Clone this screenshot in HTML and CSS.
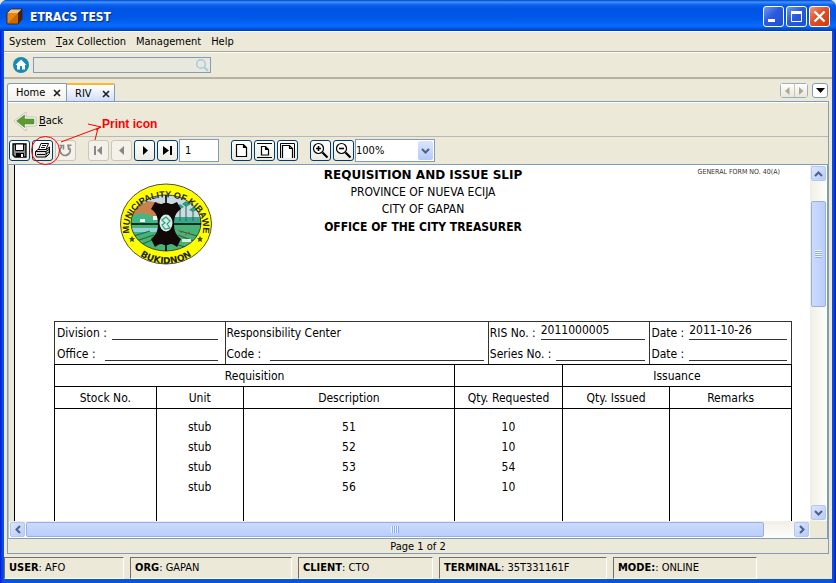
FILE: index.html
```html
<!DOCTYPE html>
<html lang="en">
<head>
<meta charset="utf-8">
<title>ETRACS TEST</title>
<link rel="stylesheet" href="styles.css">
</head>
<body>
<div class="window">
  <header class="titlebar">
    <svg class="app-icon" viewBox="0 0 17 17" width="17" height="17" aria-hidden="true">
      <path d="M1 5 5 1h11l-4 4z" fill="#e9c78a"/><path d="M12 5l4-4v10l-4 5z" fill="#4a2508"/><path d="M1 5h11v11H1z" fill="#e8860f"/><path d="M1 16 12 5v11z" fill="#c96a06"/><path d="M1 5 5 1h11v10l-4 5H1z" fill="none" stroke="#3a1d08" stroke-width=".8"/>
    </svg>
    <h1 class="title">ETRACS TEST</h1>
    <button class="win-btn" aria-label="Minimize"><svg viewBox="0 0 19 19" width="19" height="19"><path d="M4 12h7v3H4z" fill="#fff"/></svg></button>
    <button class="win-btn" aria-label="Maximize"><svg viewBox="0 0 19 19" width="19" height="19"><path d="M4.500 5.500h10v9h-10z" fill="none" stroke="#fff"/><path d="M4 4h11v3H4z" fill="#fff"/></svg></button>
    <button class="win-btn close" aria-label="Close"><svg viewBox="0 0 19 19" width="19" height="19"><path d="M4.500 4.500l10 10M14.500 4.500l-10 10" stroke="#fff" stroke-width="2.300"/></svg></button>
  </header>

  <nav class="menubar">
    <button>System</button><button><u>T</u>ax Collection</button><button>Management</button><button>Help</button>
  </nav>

  <div class="quickbar">
    <button class="home" aria-label="Home"><svg viewBox="0 0 16 16" width="16" height="16"><circle cx="8" cy="8" r="8" fill="#168ab4"/><path d="M8 2.500 2.500 8H4v4.500h3V9h2v3.500h3V8h1.500z" fill="#fff"/></svg></button>
    <label class="search"><input type="text" aria-label="Search"><svg viewBox="0 0 14 14" width="14" height="14"><circle cx="6" cy="6" r="4.300" fill="none" stroke="#a5cbdc" stroke-width="1.500"/><path d="M9 9l4 4" stroke="#a5cbdc" stroke-width="2"/></svg></label>
  </div>

  <div class="tabstrip">
    <div class="tab">Home<button aria-label="Close Home"><svg viewBox="0 0 8 8" width="8" height="8"><path d="M1 1l6 6M7 1 1 7" stroke="#222" stroke-width="1.700"/></svg></button></div>
    <div class="tab active">RIV<button aria-label="Close RIV"><svg viewBox="0 0 8 8" width="8" height="8"><path d="M1 1l6 6M7 1 1 7" stroke="#222" stroke-width="1.700"/></svg></button></div>
    <div class="tab-nav">
      <button aria-label="Previous tab"><svg viewBox="0 0 5 8" width="5" height="8"><path d="M4.500 0v8L0 4z" fill="#aca899"/></svg></button><button aria-label="Next tab"><svg viewBox="0 0 5 8" width="5" height="8"><path d="M0 0v8l4.500-4z" fill="#aca899"/></svg></button>
    </div>
    <button class="tab-list" aria-label="Tab list"><svg viewBox="0 0 9 5" width="9" height="5"><path d="M0 0h9L4.500 5z" fill="#000"/></svg></button>
  </div>

  <main class="panel">
    <div class="backbar">
      <button class="back"><svg viewBox="0 0 24 20" width="24" height="20" aria-hidden="true"><path d="M1 10 13 1v5h10v9H13v5z" fill="#fff" stroke="#c4c2b6"/><path d="M3.500 10 11.500 4v4H21v5h-9.500v3.500z" fill="#5b9a31" stroke="#4a8428" stroke-width=".6"/></svg><span><u>B</u>ack</span></button>
    </div>

    <div class="toolbar">
      <div class="group">
        <button aria-label="Save"><svg viewBox="0 0 17 17"><path d="M2 2h13v13H4l-2-2z" fill="#8a8a8a" stroke="#000" stroke-width="1.300"/><path d="M4.500 2h8v6.500h-8z" fill="#fff" stroke="#000"/><path d="M5 11h8v4H5z" fill="#000"/><path d="M10 12h2v3h-2z" fill="#fff"/></svg></button>
        <button aria-label="Print"><svg viewBox="0 0 17 17"><path d="M4.500 7.500 7 1.500h7.500L12 7.500z" fill="#fff" stroke="#000"/><path d="M8 3.500h4M7 5.500h4" stroke="#000" stroke-width=".9"/><path d="M1.500 9.500 4 7.500h8.500L15.500 5v6.500L12 15H2.500l-1-2z" fill="#ddd" stroke="#000"/><path d="M1.500 9.500H12L15.500 7M12 9.500V15M3 12.500h8M12 12l3.500-2.500" fill="none" stroke="#000"/></svg></button>
        <button disabled aria-label="Reload"><svg viewBox="0 0 17 17"><path d="M5 4.500A5 5 0 1 0 12.500 6" fill="none" stroke="#8a8a8a" stroke-width="1.900"/><path d="M10 2.500h4.500v1.500h-2V8H11z" fill="#8a8a8a"/><path d="M2.500 3.500h4v4" fill="none" stroke="#8a8a8a" stroke-width="1.500"/></svg></button>
      </div>
      <div class="group">
        <button disabled aria-label="First page"><svg viewBox="0 0 17 17"><path d="M4 4h2v9H4zM12 4v9L7 8.500z" fill="#888"/></svg></button>
        <button disabled aria-label="Previous page"><svg viewBox="0 0 17 17"><path d="M11 4v9L6 8.500z" fill="#888"/></svg></button>
        <button aria-label="Next page"><svg viewBox="0 0 17 17"><path d="M7 4v9l5-4.500z"/></svg></button>
        <button aria-label="Last page"><svg viewBox="0 0 17 17"><path d="M4 4v9l6-4.500zM11 4h2v9h-2z"/></svg></button>
        <input class="page-no" type="text" value="1" aria-label="Page number">
      </div>
      <div class="group">
        <button aria-label="Actual size"><svg viewBox="0 0 17 17"><path d="M3.500 2.500h7l3 3v9h-10zM10.500 2.500v3h3" fill="#fff" stroke="#000" stroke-width="1.200"/></svg></button>
        <button aria-label="Fit page"><svg viewBox="0 0 17 17"><path d="M1 1.500h15M1 15.500h15" stroke="#000"/><path d="M5.500 4.500h4l3 3v5.500h-7zM9.500 4.500v3h3" fill="#fff" stroke="#000" stroke-width="1.200"/></svg></button>
        <button aria-label="Fit width"><svg viewBox="0 0 17 17"><path d="M1.500 16V1.500h14V16" fill="none" stroke="#000"/><path d="M3.500 16V3.500h7l3 3V16M10.500 3.500v3h3" fill="#fff" stroke="#000" stroke-width="1.200"/></svg></button>
      </div>
      <div class="group">
        <button aria-label="Zoom in"><svg viewBox="0 0 17 17"><circle cx="6.500" cy="6.500" r="5" fill="#fff" stroke="#000" stroke-width="1.200"/><path d="M4 6.500h5M6.500 4v5" stroke="#000" stroke-width="1.600"/><path d="M10.500 10.500l5 5" stroke="#000" stroke-width="2.200"/></svg></button>
        <button aria-label="Zoom out"><svg viewBox="0 0 17 17"><circle cx="6.500" cy="6.500" r="5" fill="#fff" stroke="#000" stroke-width="1.200"/><path d="M4 6.500h5" stroke="#000" stroke-width="1.600"/><path d="M10.500 10.500l5 5" stroke="#000" stroke-width="2.200"/></svg></button>
        <div class="zoom"><select aria-label="Zoom level"><option>100%</option></select><span class="drop"><svg viewBox="0 0 9 6" width="9" height="6"><path d="M1 1l3.500 3.500L8 1" fill="none" stroke="#4d6185" stroke-width="2"/></svg></span></div>
      </div>
      <div class="note">
        <svg viewBox="0 0 110 50" width="110" height="50" fill="none" stroke="#f00" aria-hidden="true"><circle cx="37.500" cy="32.500" r="14"/><path d="M53 24l40-15-13-3M87 22l3-12M93 9l-5 3"/></svg>
        <span>Print icon</span>
      </div>
    </div>

    <div class="viewport">
      <div class="page">
        <div class="report-head">
          <svg class="seal" viewBox="0 0 92 82" width="92" height="82" role="img" aria-label="Municipality seal">
            <defs>
              <path id="arcTop" d="M10.500 54A37 31 0 1 1 81.500 54"/>
              <path id="arcBottom" d="M7 57A42 37.500 0 0 0 85 57"/>
              <clipPath id="inner"><ellipse cx="46" cy="40" rx="35" ry="28"/></clipPath>
            </defs>
            <ellipse cx="46" cy="41" rx="45.500" ry="40" fill="#ff0" stroke="#222" stroke-width=".8"/>
            <g clip-path="url(#inner)">
              <path d="M10 12h72v30H10z" fill="#c9dbe2"/>
              <path d="M10 28l10-6 8-4 12 2 6 12v9H10z" fill="#c9824c"/><path d="M10 33l12-3 10 3 14-3v12H10z" fill="#3fb786"/>
              <path d="M20 36h5v3h-5zM33 33h6v4h-6z" fill="#f6f4ee"/>
              <path d="M50 34h32v8H50z" fill="#36a98a"/>
              <path d="M60 24v14M66 22v16M73 27v11" stroke="#37605c"/><path d="M56 24l4-3 4 3-4 2zM62 21l4-3 5 3-5 3zM69 27l4-3 4 3-4 2z" fill="#2a9d80"/>
              <path d="M10 42h72v30H10z" fill="#48b377"/><path d="M10 45h30v4H10z" fill="#8fd2dc"/><path d="M14 53l16-5M16 58l18-6M20 62l12-5M58 52l18 7M60 48l17 5M54 61l15 4" stroke="#216a42" stroke-width="1.200"/>
              <path d="M62 56h9v3h-9z" fill="#dce9e0"/><path d="M58 47l4 3M65 52l5-3M72 57l6 1" stroke="#c33b35"/>
            </g>
            <ellipse cx="46" cy="40" rx="35" ry="28" fill="none" stroke="#222" stroke-width=".8"/>
            <path d="M46 12v56M11 41h70" stroke="#000" stroke-width="1.600"/>
            <path d="M35 19c4 2 6 3 9 1h4c3 2 5 1 9-1l4 7c-5 3-7 8-7 15s2 11 7 15l-4 8c-4-3-6-4-9-2h-4c-3-2-5-1-9 2l-4-8c5-4 7-8 7-15s-2-12-7-15z" fill="#130808"/>
            <ellipse cx="46" cy="40" rx="6.500" ry="8.500" fill="#d4efe7"/><path d="M42 37l4-3 4 4-3 3 3 4-5 1-3-4 3-2z" fill="none" stroke="#349c88" stroke-width="1.200"/>
            <path d="M12 53l1 2h2l-1.500 1.500.5 2.500-2-1-2 1 .5-2.500L9 55h2zM80 53l1 2h2l-1.500 1.500.5 2.500-2-1-2 1 .5-2.500L77 55h2z" fill="#3b4a20"/>
            <text class="seal-text"><textPath href="#arcTop" startOffset="50%" text-anchor="middle">MUNICIPALITY OF KIBAWE</textPath></text>
            <text class="seal-text wide"><textPath href="#arcBottom" startOffset="50%" text-anchor="middle">BUKIDNON</textPath></text>
          </svg>
          <div class="heading">
            <h2 class="wide">REQUISITION AND ISSUE SLIP</h2>
            <p>PROVINCE OF NUEVA ECIJA</p>
            <p>CITY OF GAPAN</p>
            <h2>OFFICE OF THE CITY TREASURER</h2>
          </div>
          <p class="form-no">GENERAL FORM NO. 40(A)</p>
        </div>

        <div class="info">
          <div class="info-cell short">
            <div class="line">Division :<span class="blank"></span></div>
            <div class="line">Office :<span class="blank far"></span></div>
          </div>
          <div class="info-cell">
            <div class="line">Responsibility Center</div>
            <div class="line">Code :<span class="blank far"></span></div>
          </div>
          <div class="info-cell">
            <div class="line">RIS No. :<span class="blank">2011000005</span></div>
            <div class="line">Series No. :<span class="blank"></span></div>
          </div>
          <div class="info-cell">
            <div class="line">Date :<span class="blank">2011-10-26</span></div>
            <div class="line">Date :<span class="blank"></span></div>
          </div>
        </div>

        <table class="items">
          <colgroup><col class="c-stock"><col class="c-unit"><col class="c-desc"><col class="c-qty"><col class="c-qty"><col class="c-rem"></colgroup>
          <thead>
            <tr><th colspan="3">Requisition</th><th></th><th colspan="2">Issuance</th></tr>
            <tr><th>Stock No.</th><th>Unit</th><th>Description</th><th>Qty. Requested</th><th>Qty. Issued</th><th>Remarks</th></tr>
          </thead>
          <tbody>
            <tr class="first"><td></td><td>stub</td><td>51</td><td>10</td><td></td><td></td></tr>
            <tr><td></td><td>stub</td><td>52</td><td>10</td><td></td><td></td></tr>
            <tr><td></td><td>stub</td><td>53</td><td>54</td><td></td><td></td></tr>
            <tr><td></td><td>stub</td><td>56</td><td>10</td><td></td><td></td></tr>
            <tr class="rest"><td></td><td></td><td></td><td></td><td></td><td></td></tr>
          </tbody>
        </table>
      </div>
      <div class="scroll vertical">
        <button aria-label="Scroll up"><svg viewBox="0 0 9 6" width="9" height="6"><path d="M1 5l3.500-3.500L8 5" fill="none" stroke="#4d6185" stroke-width="2"/></svg></button>
        <div class="track"><div class="thumb"><i></i></div></div>
        <button aria-label="Scroll down"><svg viewBox="0 0 9 6" width="9" height="6"><path d="M1 1l3.500 3.500L8 1" fill="none" stroke="#4d6185" stroke-width="2"/></svg></button>
      </div>
      <div class="scroll horizontal">
        <button aria-label="Scroll left"><svg viewBox="0 0 6 9" width="6" height="9"><path d="M5 1 1.500 4.500 5 8" fill="none" stroke="#4d6185" stroke-width="2"/></svg></button>
        <div class="track"><div class="thumb"><i></i></div></div>
        <button aria-label="Scroll right"><svg viewBox="0 0 6 9" width="6" height="9"><path d="M1 1l3.500 3.500L1 8" fill="none" stroke="#4d6185" stroke-width="2"/></svg></button>
      </div>
    </div>
    <p class="page-of">Page 1 of 2</p>
  </main>

  <footer class="status">
    <div><b>USER</b>: AFO</div>
    <div><b>ORG</b>: GAPAN</div>
    <div><b>CLIENT</b>: CTO</div>
    <div><b>TERMINAL</b>: 35T331161F</div>
    <div><b>MODE:</b>: ONLINE</div>
  </footer>
</div>
</body>
</html>
```
FILE: styles.css
```css
* { box-sizing: border-box; }

body, h1, h2, p { margin: 0; }

body {
  background: #ece9d8;
  color: #000;
  font: 11px/16px "DejaVu Sans Condensed", "Liberation Sans", sans-serif;
}

button, input, select { font: inherit; color: inherit; margin: 0; padding: 0; }
button { border: 0; background: none; display: flex; align-items: center; justify-content: center; }
svg { display: block; flex: none; }

.window {
  height: 100vh;
  display: flex;
  flex-direction: column;
  padding: 0 4px 4px;
  border-radius: 7px 7px 0 0;
  background: linear-gradient(90deg, #0019cf 0, #0842e8 2px, #0855dd 4px, #0855dd calc(100% - 4px), #0842e8 calc(100% - 2px), #001590 100%);
}

/* Title bar */
.titlebar {
  flex: none;
  display: flex;
  align-items: center;
  gap: 2px;
  height: 31px;
  margin: 0 -4px;
  padding: 2px 6px 0;
  border-radius: 7px 7px 0 0;
  background: linear-gradient(#0040c8 0, #3d95ff 2px, #0a5ff0 5px, #0054e3 9px, #0058e8 18px, #066bff 26px, #0050d8 29px, #0038b0 31px);
}
.title {
  flex: 1;
  padding-left: 5px;
  color: #fff;
  font: bold 12px/18px "DejaVu Sans Condensed", sans-serif;
  text-shadow: 1px 1px 1px #0a2a80;
}
.win-btn {
  width: 21px;
  height: 21px;
  border: 1px solid #fff;
  border-radius: 3px;
  background: linear-gradient(135deg, #6f98f2, #2a5ade 45%, #1d4fd6);
}
.win-btn.close { background: linear-gradient(135deg, #f0987c, #e04f28 45%, #cc3c14); }

/* Menu and quick bar */
.menubar, .quickbar, .tabstrip, .panel, .status { background-color: #ece9d8; }
.menubar {
  flex: none;
  display: flex;
  gap: 10px;
  height: 21px;
  padding: 0 5px;
  border-top: 1px solid #fff;
  border-bottom: 1px solid #aca899;
}
.quickbar {
  flex: none;
  display: flex;
  align-items: center;
  gap: 4px;
  height: 27px;
  padding: 0 9px;
  border-top: 1px solid #fff;
  border-bottom: 2px solid #b5b2a3;
}
.search { position: relative; width: 178px; height: 16px; }
.search input {
  display: block;
  width: 100%;
  height: 100%;
  border: 1px solid #7f9db9;
  background: #e9e8df;
}
.search svg { position: absolute; right: 2px; top: 1px; }

/* Tabs */
.tabstrip {
  flex: none;
  display: flex;
  align-items: flex-start;
  height: 22px;
  padding: 4px 4px 0 3px;
}
.tab {
  display: flex;
  align-items: center;
  justify-content: space-between;
  width: 60px;
  height: 18px;
  padding: 1px 5px 0 8px;
  border: 1px solid #7f9db9;
  border-bottom: 0;
  border-radius: 3px 0 0 0;
  background: linear-gradient(#fff, #f3f1e8);
}
.tab.active {
  position: relative;
  width: 49px;
  height: 19px;
  margin-left: -1px;
  padding: 0 4px 0 8px;
  border-top: 2px solid #fdb92c;
  border-radius: 2px 2px 0 0;
  background: linear-gradient(#fff, #cfdcf8);
}
.tab-nav { display: flex; margin-left: auto; margin-right: 4px; border: 1px solid #9fb0bd; border-radius: 3px; }
.tab-nav button { width: 13px; height: 13px; background: linear-gradient(#fff, #e8e6da); }
.tab-nav button + button { border-left: 1px solid #c9c6b8; }
.tab-list { width: 16px; height: 15px; border: 1px solid #7f9db9; border-radius: 3px; background: #fff; }

/* Panel */
.panel {
  flex: 1;
  min-height: 0;
  display: flex;
  flex-direction: column;
  padding: 0;
  border: 1px solid #7f9db9;
  box-shadow: 0 0 0 3px #ece9d8;
  clip-path: inset(0 -3px 0 -3px);
  margin: 0 3px;
}
.backbar {
  flex: none;
  display: flex;
  align-items: center;
  height: 35px;
  padding: 3px 5px 0;
  border-top: 1px solid #fff;
  border-bottom: 1px solid #b9b8b4;
}
.back { gap: 2px; }
.toolbar {
  position: relative;
  flex: none;
  display: flex;
  align-items: center;
  gap: 12px;
  height: 27px;
  padding: 0 1px;
}
.group { display: flex; align-items: center; gap: 2px; }
.group button {
  width: 21px;
  height: 21px;
  border: 1px solid #003c74;
  border-radius: 3px;
  background: linear-gradient(#fff, #ecebe4);
}
.group button svg { width: 17px; height: 17px; }
.group button:disabled { border-color: #c9c7ba; background: #f3f1e8; }
.page-no {
  width: 40px;
  height: 23px;
  margin-left: -1px;
  padding: 0 5px;
  border: 1px solid #7f9db9;
  background: #fff;
}
.zoom { position: relative; width: 80px; height: 23px; margin-left: -1px; }
.zoom select {
  display: block;
  appearance: none;
  width: 100%;
  height: 100%;
  border: 1px solid #7f9db9;
  border-radius: 0;
  background: #fff;
}
.drop {
  position: absolute;
  inset: 2px 2px 2px auto;
  width: 15px;
  display: flex;
  align-items: center;
  justify-content: center;
  border-radius: 2px;
  background: linear-gradient(#dbe5ff, #b5c9f8);
  pointer-events: none;
}
.note {
  position: absolute;
  left: 0;
  top: -19px;
  color: #f00;
  font: bold 12px/14px "Liberation Sans", sans-serif;
  pointer-events: none;
}
.note span { position: absolute; left: 94px; top: -1px; white-space: nowrap; }

/* Report viewport */
.viewport {
  flex: 1;
  min-height: 0;
  display: grid;
  grid-template: minmax(0, 1fr) 17px / minmax(0, 1fr) 17px;
  border: 1px solid #7f9db9;
  border-left-color: #aebdca;
}
.page {
  display: flex;
  flex-direction: column;
  overflow: hidden;
  margin-left: 5px;
  padding: 1px 18px 0 39px;
  border-left: 1px solid #000;
  background: #fff;
  font-size: 12px;
}
.report-head {
  flex: none;
  display: grid;
  grid-template-columns: 1fr auto 1fr;
  align-items: start;
  height: 155px;
}
.seal { margin: 17px 0 0 66px; }
.seal-text { font: bold 9px "Liberation Sans", sans-serif; fill: #222; }
.seal-text.wide { font-family: "DejaVu Sans", sans-serif; }
.heading { text-align: center; line-height: 17px; }
.heading h2 { font-size: 12px; line-height: 18px; }
.heading .wide { font-family: "DejaVu Sans", sans-serif; }
.form-no { justify-self: end; padding-right: 12px; font-size: 7px; line-height: 12px; color: #333; }

.info {
  flex: none;
  display: grid;
  grid-template-columns: 170fr 264fr 162fr 142fr;
  border: 1px solid #333;
  border-bottom: 0;
}
.info-cell { padding: 0 4px 0 2px; }
.info-cell.short { padding-right: 7px; }
.info-cell + .info-cell { padding-left: 1px; border-left: 1px solid #333; }
.line { display: flex; height: 21px; line-height: 23px; white-space: nowrap; }
.blank { flex: 1; height: 18px; margin-left: 5px; border-bottom: 1px solid #333; line-height: 17px; }
.blank.far { margin-left: 9px; }

.items {
  flex: 1;
  width: 100%;
  table-layout: fixed;
  border-collapse: collapse;
  text-align: center;
}
.c-stock { width: 13.8%; }
.c-unit { width: 11.8%; }
.c-desc { width: 28.7%; }
.c-qty { width: 14.6%; }
.items th { height: 22px; padding: 0; border: 1px solid #000; font-weight: normal; }
.items td { height: 20px; padding: 0; border: solid #000; border-width: 0 1px; }
.items .first td { height: 28px; padding-top: 8px; }
.items .rest td { height: 60px; }

/* Scroll bars */
.scroll { display: flex; background: linear-gradient(90deg, #f0efe6, #fefefb); padding: 1px; }
.scroll.vertical { flex-direction: column; }
.scroll.horizontal { background: linear-gradient(#f0efe6, #fefefb); }
.scroll button {
  flex: none;
  width: 15px;
  height: 15px;
  border: 1px solid #b4c7f0;
  border-radius: 2px;
  background: linear-gradient(135deg, #dbe5ff, #b8cbf8);
}
.track { flex: 1; display: flex; min-width: 0; min-height: 0; }
.vertical .track { flex-direction: column; padding: 20px 0 0; }
.thumb {
  display: flex;
  align-items: center;
  justify-content: center;
  border: 1px solid #98b0e0;
  border-radius: 2px;
  background: linear-gradient(#cbdafd, #bacdfb);
}
.vertical .thumb { height: 35%; background: linear-gradient(90deg, #cbdafd, #bacdfb); }
.horizontal .thumb { width: 96%; margin-left: 1px; }
.thumb i { width: 8px; height: 7px; background: repeating-linear-gradient(90deg, #eef4fe 0 1px, #8cb0f8 1px 2px); }
.vertical .thumb i { width: 7px; height: 8px; background: repeating-linear-gradient(#eef4fe 0 1px, #8cb0f8 1px 2px); }

.page-of { flex: none; height: 14px; line-height: 15px; text-align: center; }

/* Status bar */
.status {
  flex: none;
  display: grid;
  grid-template-columns: 120fr 162fr 135fr 168fr 144fr 69fr;
  gap: 6px;
  padding-top: 3px;
}
.status div {
  height: 22px;
  padding: 0 4px;
  line-height: 20px;
  white-space: nowrap;
  border: 1px solid;
  border-color: #716f64 #fff #fff #716f64;
}
```
